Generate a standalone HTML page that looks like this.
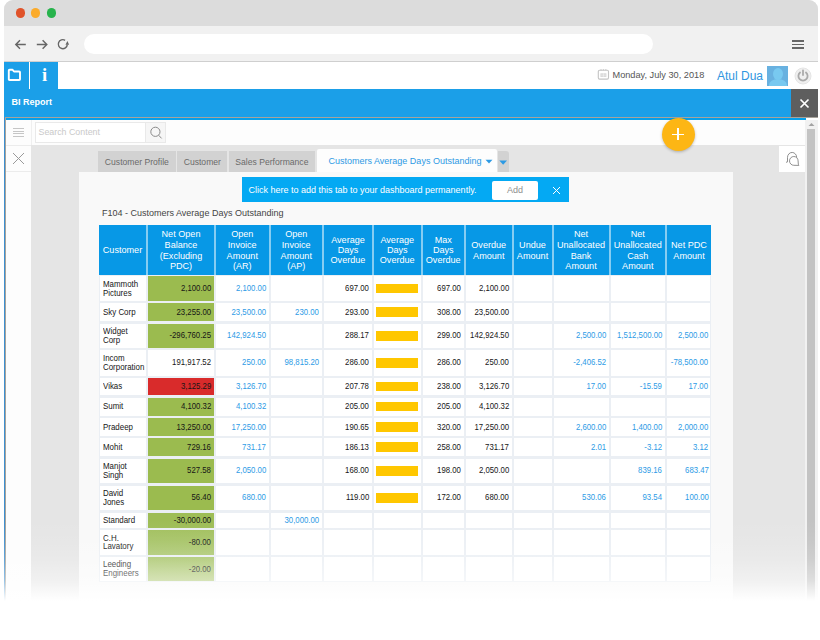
<!DOCTYPE html>
<html><head><meta charset="utf-8">
<style>
*{box-sizing:border-box;margin:0;padding:0}
html,body{width:820px;height:640px;overflow:hidden;background:#fff;font-family:"Liberation Sans", sans-serif}
.a{position:absolute}
#frame{position:absolute;left:4px;top:0;width:814px;height:640px;border-radius:9px 9px 0 0;overflow:hidden;background:#f1f1f1}
#titlebar{position:absolute;left:0;top:0;width:814px;height:26px;background:#dcdcdc}
.dot{position:absolute;width:10px;height:10px;border-radius:50%;top:8px}
#tool{position:absolute;left:0;top:26px;width:814px;height:36px;background:#f1f1f1;border-bottom:1px solid #cfcfcf}
#addr{position:absolute;left:80px;top:8px;width:569px;height:20px;border-radius:10px;background:#fff}
#apphdr{position:absolute;left:0;top:62px;width:814px;height:27px;background:#fff}
#bibar{position:absolute;left:0;top:89px;width:814px;height:28px;background:#1b9fe8}
#leftedge{position:absolute;left:0;top:117px;width:2px;height:523px;background:#3d8fd0}
#panel{position:absolute;left:1px;top:117px;width:813px;height:523px;border-top:1px solid #a8a39b;border-left:1px solid #a8a39b;background:#fff}
#bluestrip{position:absolute;left:0;top:0;width:800px;height:2px;background:#079fe9}
.hc{position:absolute;background:#0798e6;color:#fff;font-size:9.1px;line-height:10.5px;text-align:center;display:flex;align-items:center;justify-content:center}
.hl{position:absolute;color:#fff;font-size:9.1px;line-height:10px;text-align:center;white-space:nowrap}
.hbg{position:absolute;background:#86cdf2}
.tbg{position:absolute;background:#ebeff4}
.c{position:absolute;font-size:8.8px;line-height:8.6px;color:#161616;display:flex;align-items:center;justify-content:flex-end;padding-right:2.7px;white-space:nowrap}
.cust{justify-content:flex-start;padding-left:3px;padding-right:0}
.bl{color:#2d9be6}
.c span{display:inline-block;transform:scaleX(0.885);transform-origin:right center}
.cust span{transform-origin:left center;transform:scaleX(0.9)}
.barc{justify-content:flex-start;padding-left:2px}
.tab{position:absolute;height:21px;background:#d2d2d2;color:#6a6a6a;font-size:8.6px;line-height:22.5px;text-align:center;white-space:nowrap}
.bar{display:block;width:42px;height:9.5px;background:#ffc700}
.barc span{transform:none}
</style></head><body>
<div id="frame">
  <div id="titlebar">
    <div class="dot" style="left:11.5px;width:9.5px;height:9.5px;top:8.3px;background:#e0532a"></div>
    <div class="dot" style="left:26.8px;width:9.5px;height:9.5px;top:8.3px;background:#fbab2b"></div>
    <div class="dot" style="left:42.6px;width:9.5px;height:9.5px;top:8.3px;background:#27b34c"></div>
  </div>
  <div id="tool">
    <svg class="a" style="left:10px;top:12px" width="14" height="13" viewBox="0 0 14 13"><path d="M11.8 6.5 L1.8 6.5 M6 2.3 L1.8 6.5 L6 10.7" fill="none" stroke="#666" stroke-width="1.45"/></svg>
    <svg class="a" style="left:32px;top:12px" width="14" height="13" viewBox="0 0 14 13"><path d="M0.8 6.5 L10.8 6.5 M6.6 2.3 L10.8 6.5 L6.6 10.7" fill="none" stroke="#666" stroke-width="1.45"/></svg>
    <svg class="a" style="left:52px;top:11px" width="16" height="14" viewBox="0 0 16 14"><path d="M11.3 7.6 A4.5 4.5 0 1 1 9.1 3.3" fill="none" stroke="#666" stroke-width="1.4"/><path d="M9.5 7.7 L13.1 7.7 L11.4 3.9 Z" fill="#666"/></svg>
    <div id="addr"></div>
    <div class="a" style="left:788px;top:14px;width:12px;height:1.6px;background:#666"></div>
    <div class="a" style="left:788px;top:17.5px;width:12px;height:1.6px;background:#666"></div>
    <div class="a" style="left:788px;top:21px;width:12px;height:1.6px;background:#666"></div>
  </div>
  <div id="apphdr">
    <div class="a" style="left:0;top:0;width:54px;height:27px;background:#1b9fe8"></div>
    <div class="a" style="left:25px;top:0;width:1px;height:27px;background:#fff"></div>
    <svg class="a" style="left:3px;top:6px" width="15" height="14" viewBox="0 0 15 14"><path d="M1.8 2.6 Q1.8 1.8 2.6 1.8 L5.6 1.8 L7.0 3.5 L12.2 3.5 Q13 3.5 13 4.3 L13 11.2 Q13 12 12.2 12 L2.6 12 Q1.8 12 1.8 11.2 Z" fill="none" stroke="#fff" stroke-width="1.9" stroke-linejoin="round"/></svg>
    <div class="a" style="left:34.5px;top:2.5px;width:12px;text-align:center;font:bold 18.5px 'Liberation Serif',serif;color:#fff;line-height:21px">i</div>
    <svg class="a" style="left:593px;top:6px" width="13" height="13" viewBox="0 0 13 13"><rect x="1.3" y="2.2" width="10.2" height="8.9" rx="1.3" fill="none" stroke="#c4c4c4" stroke-width="1.1"/><path d="M4 1 L4 2.6 M6.4 1 L6.4 2.6 M8.8 1 L8.8 2.6" stroke="#c4c4c4" stroke-width="0.8"/><rect x="3.4" y="5.3" width="6" height="3.6" fill="#d6d6d6"/><path d="M6.4 5.3 L6.4 8.9 M3.4 7.1 L9.4 7.1" stroke="#f4f4f4" stroke-width="0.6"/></svg>
    <div class="a" style="left:608.5px;top:7.5px;font-size:9.2px;line-height:11px;color:#555">Monday, July 30, 2018</div>
    <div class="a" style="left:713px;top:5.5px;font-size:12px;line-height:16px;color:#2e96e0">Atul Dua</div>
    <div class="a" style="left:763px;top:3.5px;width:21px;height:20.5px;background:#68b1e0;overflow:hidden">
      <div class="a" style="left:5.5px;top:2.5px;width:10px;height:12px;border-radius:50%;background:#78c9f0"></div>
      <div class="a" style="left:1.5px;top:13.5px;width:18px;height:12px;border-radius:50% 50% 0 0;background:#78c9f0"></div>
    </div>
    <svg class="a" style="left:790px;top:4.5px" width="18" height="18" viewBox="0 0 18 18"><circle cx="9" cy="9" r="8" fill="#efefef" stroke="#e4e4e4" stroke-width="1"/><path d="M6.04 5.48 A4.6 4.6 0 1 0 11.96 5.48" fill="none" stroke="#aaa" stroke-width="1.8" stroke-linecap="round"/><path d="M9 3.4 L9 8" stroke="#aaa" stroke-width="1.8" stroke-linecap="round"/></svg>
  </div>
  <div id="bibar">
    <div class="a" style="left:7.5px;top:8px;font-weight:bold;font-size:9px;line-height:11px;color:#fff">BI Report</div>
    <div class="a" style="left:787px;top:0;width:27px;height:28px;background:#5e5e5e"></div>
    <svg class="a" style="left:795px;top:9px" width="11" height="11" viewBox="0 0 11 11"><path d="M1.5 1.5 L9.5 9.5 M9.5 1.5 L1.5 9.5" stroke="#fff" stroke-width="1.7"/></svg>
  </div>
  <div id="leftedge"></div>
  <div id="panel">
    <div id="bluestrip"></div>
    <!-- toolbar row -->
    <div class="a" style="left:0;top:2px;width:799px;height:25px;background:#fdfdfd"></div>
    <!-- gray area -->
    <div class="a" style="left:25.3px;top:26.6px;width:774px;height:500px;background:#e5e5e5"></div>
    <div class="a" style="left:25px;top:2px;width:1px;height:25px;background:#efefef"></div>
    <!-- sidebar -->
    <div class="a" style="left:0;top:2px;width:25.4px;height:520px;background:#fdfdfd"></div>
    <div class="a" style="left:0;top:27px;width:25.4px;height:1px;background:#ececec"></div>
    <div class="a" style="left:0;top:53.3px;width:25.4px;height:1px;background:#ececec"></div>
    <div class="a" style="left:7px;top:9.8px;width:10.5px;height:0.8px;background:#c6c6c6"></div>
    <div class="a" style="left:7px;top:12.7px;width:10.5px;height:0.8px;background:#c6c6c6"></div>
    <div class="a" style="left:7px;top:15.2px;width:10.5px;height:0.8px;background:#c6c6c6"></div>
    <div class="a" style="left:7px;top:17.8px;width:10.5px;height:0.8px;background:#c6c6c6"></div>
    <svg class="a" style="left:6px;top:34px" width="13" height="13" viewBox="0 0 13 13"><path d="M1 1 L12 12 M12 1 L1 12" stroke="#9a9a9a" stroke-width="1"/></svg>
    <!-- search -->
    <div class="a" style="left:29px;top:4px;width:111px;height:20.5px;background:#fff;border:1px solid #e9e9e9"></div>
    <div class="a" style="left:139px;top:4px;width:21px;height:20.5px;background:#f6f6f6;border:1px solid #e9e9e9"></div>
    <div class="a" style="left:32.5px;top:9px;font-size:8.85px;line-height:11px;color:#c9c9c9">Search Content</div>
    <svg class="a" style="left:143px;top:7px" width="14" height="15" viewBox="0 0 14 15"><circle cx="6.4" cy="6.8" r="4.6" fill="none" stroke="#8a8a8a" stroke-width="1"/><path d="M9.6 10.2 L12.6 13.4" stroke="#8a8a8a" stroke-width="1"/></svg>
    <!-- right chat box -->
    <div class="a" style="left:773px;top:27.5px;width:26px;height:26px;background:#fff"></div>
    <svg class="a" style="left:776px;top:30px" width="22" height="22" viewBox="0 0 22 22"><path d="M4.0 14.3 L5.5 13.9 L5.5 9.3 A4.6 5.0 0 0 1 14.7 9.6" fill="none" stroke="#8a8a8a" stroke-width="0.95"/><path d="M11.8 17.3 A4.3 4.4 0 1 1 16.1 12.9 L16.3 16.2 L16.9 17.4 Z" fill="#fff" stroke="#8a8a8a" stroke-width="0.95" stroke-linejoin="round"/></svg>
    <!-- scrollbar -->
    <div class="a" style="left:799px;top:2px;width:13px;height:521px;background:#f1f1f1"></div>
    <svg class="a" style="left:802px;top:4px" width="7" height="5" viewBox="0 0 7 5"><path d="M0.5 4 L3.5 1 L6.5 4 Z" fill="#a3a3a3"/></svg>
    <div class="a" style="left:801px;top:11px;width:8px;height:511px;background:#c3c3c3"></div>
    <!-- tabs -->
    <div class="tab" style="left:92px;top:33px;width:77.7px">Customer Profile</div>
    <div class="tab" style="left:171.2px;top:33px;width:50.3px">Customer</div>
    <div class="tab" style="left:223px;top:33px;width:85.8px">Sales Performance</div>
    <div class="a" style="left:310.7px;top:31px;width:180.6px;height:23px;background:#fdfdfd;border-radius:2px 2px 0 0"></div>
    <div class="a" style="left:322.5px;top:37.5px;font-size:9px;line-height:11px;color:#2d9ae4">Customers Average Days Outstanding</div>
    <svg class="a" style="left:479px;top:41px" width="8" height="5" viewBox="0 0 8 5"><path d="M0.5 0.8 L7.5 0.8 L4 4.4 Z" fill="#2d9ae4"/></svg>
    <div class="a" style="left:491.8px;top:33.3px;width:11px;height:20.7px;background:#d2d2d2;border-radius:0 3px 0 0"></div>
    <svg class="a" style="left:493.3px;top:41.8px" width="9" height="6" viewBox="0 0 9 6"><path d="M0.3 0.5 L8 0.5 L4.15 4.8 Z" fill="#2d9ae4"/></svg>
    <!-- content panel -->
    <div class="a" style="left:72.5px;top:54px;width:654.5px;height:470px;background:#f9f9f9"></div>
    <div class="a" style="left:236px;top:59.3px;width:327.3px;height:25px;background:#04a9f3"></div>
    <div class="a" style="left:242.5px;top:66.5px;font-size:9px;line-height:11px;color:#fff">Click here to add this tab to your dashboard permanently.</div>
    <div class="a" style="left:485.6px;top:63px;width:46.7px;height:18.5px;background:#fff;border-radius:2px"></div>
    <div class="a" style="left:485.5px;top:66.8px;width:47px;text-align:center;font-size:9px;line-height:11px;color:#8f8f8f">Add</div>
    <svg class="a" style="left:546px;top:68px" width="9" height="9" viewBox="0 0 9 9"><path d="M1 1 L8 8 M8 1 L1 8" stroke="#fff" stroke-width="1"/></svg>
    <div class="a" style="left:96px;top:90px;font-size:9px;line-height:11px;color:#444">F104 - Customers Average Days Outstanding</div>
  </div>
  <!-- FAB -->
  <div class="a" style="left:658px;top:118px;width:33px;height:33px;border-radius:50%;background:#fdb614;box-shadow:0 1px 3px rgba(0,0,0,0.25)"></div>
  <div class="a" style="left:668px;top:133.5px;width:12px;height:1.5px;background:#fff"></div>
  <div class="a" style="left:673.3px;top:128.3px;width:1.5px;height:12px;background:#fff"></div>
</div>
<div class="tbg" style="left:99px;top:275px;width:612px;height:306.5px"></div>
<div class="hbg" style="left:99px;top:225px;width:612px;height:50px"></div>
<div class="hc" style="left:99px;top:225px;width:47px;height:50px"></div>
<div class="hl" style="left:99px;top:245px;width:47px">Customer</div>
<div class="hc" style="left:148px;top:225px;width:66px;height:50px"></div>
<div class="hl" style="left:148px;top:229px;width:66px">Net Open</div>
<div class="hl" style="left:148px;top:240px;width:66px">Balance</div>
<div class="hl" style="left:148px;top:251px;width:66px">(Excluding</div>
<div class="hl" style="left:148px;top:261px;width:66px">PDC)</div>
<div class="hc" style="left:216px;top:225px;width:52.5px;height:50px"></div>
<div class="hl" style="left:216px;top:229px;width:52.5px">Open</div>
<div class="hl" style="left:216px;top:240px;width:52.5px">Invoice</div>
<div class="hl" style="left:216px;top:251px;width:52.5px">Amount</div>
<div class="hl" style="left:216px;top:261px;width:52.5px">(AR)</div>
<div class="hc" style="left:270.5px;top:225px;width:51.5px;height:50px"></div>
<div class="hl" style="left:270.5px;top:229px;width:51.5px">Open</div>
<div class="hl" style="left:270.5px;top:240px;width:51.5px">Invoice</div>
<div class="hl" style="left:270.5px;top:251px;width:51.5px">Amount</div>
<div class="hl" style="left:270.5px;top:261px;width:51.5px">(AP)</div>
<div class="hc" style="left:324px;top:225px;width:48px;height:50px"></div>
<div class="hl" style="left:324px;top:235px;width:48px">Average</div>
<div class="hl" style="left:324px;top:245px;width:48px">Days</div>
<div class="hl" style="left:324px;top:255px;width:48px">Overdue</div>
<div class="hc" style="left:374px;top:225px;width:46.5px;height:50px"></div>
<div class="hl" style="left:374px;top:235px;width:46.5px">Average</div>
<div class="hl" style="left:374px;top:245px;width:46.5px">Days</div>
<div class="hl" style="left:374px;top:255px;width:46.5px">Overdue</div>
<div class="hc" style="left:422.5px;top:225px;width:41.5px;height:50px"></div>
<div class="hl" style="left:422.5px;top:235px;width:41.5px">Max</div>
<div class="hl" style="left:422.5px;top:245px;width:41.5px">Days</div>
<div class="hl" style="left:422.5px;top:255px;width:41.5px">Overdue</div>
<div class="hc" style="left:466px;top:225px;width:45.5px;height:50px"></div>
<div class="hl" style="left:466px;top:240px;width:45.5px">Overdue</div>
<div class="hl" style="left:466px;top:251px;width:45.5px">Amount</div>
<div class="hc" style="left:513.5px;top:225px;width:38px;height:50px"></div>
<div class="hl" style="left:513.5px;top:240px;width:38px">Undue</div>
<div class="hl" style="left:513.5px;top:251px;width:38px">Amount</div>
<div class="hc" style="left:553.5px;top:225px;width:55px;height:50px"></div>
<div class="hl" style="left:553.5px;top:229px;width:55px">Net</div>
<div class="hl" style="left:553.5px;top:240px;width:55px">Unallocated</div>
<div class="hl" style="left:553.5px;top:251px;width:55px">Bank</div>
<div class="hl" style="left:553.5px;top:261px;width:55px">Amount</div>
<div class="hc" style="left:610.5px;top:225px;width:54.5px;height:50px"></div>
<div class="hl" style="left:610.5px;top:229px;width:54.5px">Net</div>
<div class="hl" style="left:610.5px;top:240px;width:54.5px">Unallocated</div>
<div class="hl" style="left:610.5px;top:251px;width:54.5px">Cash</div>
<div class="hl" style="left:610.5px;top:261px;width:54.5px">Amount</div>
<div class="hc" style="left:667px;top:225px;width:44px;height:50px"></div>
<div class="hl" style="left:667px;top:240px;width:44px">Net PDC</div>
<div class="hl" style="left:667px;top:251px;width:44px">Amount</div>
<div class="c cust" style="left:100px;top:276px;width:46px;height:25px;background:#fff;"><span>Mammoth<br>Pictures</span></div>
<div class="c" style="left:148px;top:276px;width:66px;height:25px;background:#9bbb4f;"><span>2,100.00</span></div>
<div class="c bl" style="left:216px;top:276px;width:52.5px;height:25px;background:#fff;"><span>2,100.00</span></div>
<div class="c bl" style="left:270.5px;top:276px;width:51.5px;height:25px;background:#fff;"><span></span></div>
<div class="c" style="left:324px;top:276px;width:48px;height:25px;background:#fff;"><span>697.00</span></div>
<div class="c barc" style="left:374px;top:276px;width:46.5px;height:25px;background:#fff;"><span><i class="bar"></i></span></div>
<div class="c" style="left:422.5px;top:276px;width:41.5px;height:25px;background:#fff;"><span>697.00</span></div>
<div class="c" style="left:466px;top:276px;width:45.5px;height:25px;background:#fff;"><span>2,100.00</span></div>
<div class="c" style="left:513.5px;top:276px;width:38px;height:25px;background:#fff;"><span></span></div>
<div class="c bl" style="left:553.5px;top:276px;width:55px;height:25px;background:#fff;"><span></span></div>
<div class="c bl" style="left:610.5px;top:276px;width:54.5px;height:25px;background:#fff;"><span></span></div>
<div class="c bl" style="left:667px;top:276px;width:43px;height:25px;background:#fff;padding-right:1.6px;"><span></span></div>
<div class="c cust" style="left:100px;top:303px;width:46px;height:18px;background:#fff;"><span>Sky Corp</span></div>
<div class="c" style="left:148px;top:303px;width:66px;height:18px;background:#9bbb4f;"><span>23,255.00</span></div>
<div class="c bl" style="left:216px;top:303px;width:52.5px;height:18px;background:#fff;"><span>23,500.00</span></div>
<div class="c bl" style="left:270.5px;top:303px;width:51.5px;height:18px;background:#fff;"><span>230.00</span></div>
<div class="c" style="left:324px;top:303px;width:48px;height:18px;background:#fff;"><span>293.00</span></div>
<div class="c barc" style="left:374px;top:303px;width:46.5px;height:18px;background:#fff;"><span><i class="bar"></i></span></div>
<div class="c" style="left:422.5px;top:303px;width:41.5px;height:18px;background:#fff;"><span>308.00</span></div>
<div class="c" style="left:466px;top:303px;width:45.5px;height:18px;background:#fff;"><span>23,500.00</span></div>
<div class="c" style="left:513.5px;top:303px;width:38px;height:18px;background:#fff;"><span></span></div>
<div class="c bl" style="left:553.5px;top:303px;width:55px;height:18px;background:#fff;"><span></span></div>
<div class="c bl" style="left:610.5px;top:303px;width:54.5px;height:18px;background:#fff;"><span></span></div>
<div class="c bl" style="left:667px;top:303px;width:43px;height:18px;background:#fff;padding-right:1.6px;"><span></span></div>
<div class="c cust" style="left:100px;top:323.5px;width:46px;height:24.5px;background:#fff;"><span>Widget<br>Corp</span></div>
<div class="c" style="left:148px;top:323.5px;width:66px;height:24.5px;background:#9bbb4f;"><span>-296,760.25</span></div>
<div class="c bl" style="left:216px;top:323.5px;width:52.5px;height:24.5px;background:#fff;"><span>142,924.50</span></div>
<div class="c bl" style="left:270.5px;top:323.5px;width:51.5px;height:24.5px;background:#fff;"><span></span></div>
<div class="c" style="left:324px;top:323.5px;width:48px;height:24.5px;background:#fff;"><span>288.17</span></div>
<div class="c barc" style="left:374px;top:323.5px;width:46.5px;height:24.5px;background:#fff;"><span><i class="bar"></i></span></div>
<div class="c" style="left:422.5px;top:323.5px;width:41.5px;height:24.5px;background:#fff;"><span>299.00</span></div>
<div class="c" style="left:466px;top:323.5px;width:45.5px;height:24.5px;background:#fff;"><span>142,924.50</span></div>
<div class="c" style="left:513.5px;top:323.5px;width:38px;height:24.5px;background:#fff;"><span></span></div>
<div class="c bl" style="left:553.5px;top:323.5px;width:55px;height:24.5px;background:#fff;"><span>2,500.00</span></div>
<div class="c bl" style="left:610.5px;top:323.5px;width:54.5px;height:24.5px;background:#fff;"><span>1,512,500.00</span></div>
<div class="c bl" style="left:667px;top:323.5px;width:43px;height:24.5px;background:#fff;padding-right:1.6px;"><span>2,500.00</span></div>
<div class="c cust" style="left:100px;top:350px;width:46px;height:25.5px;background:#fff;"><span>Incom<br>Corporation</span></div>
<div class="c" style="left:148px;top:350px;width:66px;height:25.5px;background:#fff;"><span>191,917.52</span></div>
<div class="c bl" style="left:216px;top:350px;width:52.5px;height:25.5px;background:#fff;"><span>250.00</span></div>
<div class="c bl" style="left:270.5px;top:350px;width:51.5px;height:25.5px;background:#fff;"><span>98,815.20</span></div>
<div class="c" style="left:324px;top:350px;width:48px;height:25.5px;background:#fff;"><span>286.00</span></div>
<div class="c barc" style="left:374px;top:350px;width:46.5px;height:25.5px;background:#fff;"><span><i class="bar"></i></span></div>
<div class="c" style="left:422.5px;top:350px;width:41.5px;height:25.5px;background:#fff;"><span>286.00</span></div>
<div class="c" style="left:466px;top:350px;width:45.5px;height:25.5px;background:#fff;"><span>250.00</span></div>
<div class="c" style="left:513.5px;top:350px;width:38px;height:25.5px;background:#fff;"><span></span></div>
<div class="c bl" style="left:553.5px;top:350px;width:55px;height:25.5px;background:#fff;"><span>-2,406.52</span></div>
<div class="c bl" style="left:610.5px;top:350px;width:54.5px;height:25.5px;background:#fff;"><span></span></div>
<div class="c bl" style="left:667px;top:350px;width:43px;height:25.5px;background:#fff;padding-right:1.6px;"><span>-78,500.00</span></div>
<div class="c cust" style="left:100px;top:377.5px;width:46px;height:17.5px;background:#fff;"><span>Vikas</span></div>
<div class="c" style="left:148px;top:377.5px;width:66px;height:17.5px;background:#d92b2b;"><span>3,125.29</span></div>
<div class="c bl" style="left:216px;top:377.5px;width:52.5px;height:17.5px;background:#fff;"><span>3,126.70</span></div>
<div class="c bl" style="left:270.5px;top:377.5px;width:51.5px;height:17.5px;background:#fff;"><span></span></div>
<div class="c" style="left:324px;top:377.5px;width:48px;height:17.5px;background:#fff;"><span>207.78</span></div>
<div class="c barc" style="left:374px;top:377.5px;width:46.5px;height:17.5px;background:#fff;"><span><i class="bar"></i></span></div>
<div class="c" style="left:422.5px;top:377.5px;width:41.5px;height:17.5px;background:#fff;"><span>238.00</span></div>
<div class="c" style="left:466px;top:377.5px;width:45.5px;height:17.5px;background:#fff;"><span>3,126.70</span></div>
<div class="c" style="left:513.5px;top:377.5px;width:38px;height:17.5px;background:#fff;"><span></span></div>
<div class="c bl" style="left:553.5px;top:377.5px;width:55px;height:17.5px;background:#fff;"><span>17.00</span></div>
<div class="c bl" style="left:610.5px;top:377.5px;width:54.5px;height:17.5px;background:#fff;"><span>-15.59</span></div>
<div class="c bl" style="left:667px;top:377.5px;width:43px;height:17.5px;background:#fff;padding-right:1.6px;"><span>17.00</span></div>
<div class="c cust" style="left:100px;top:397.5px;width:46px;height:18px;background:#fff;"><span>Sumit</span></div>
<div class="c" style="left:148px;top:397.5px;width:66px;height:18px;background:#9bbb4f;"><span>4,100.32</span></div>
<div class="c bl" style="left:216px;top:397.5px;width:52.5px;height:18px;background:#fff;"><span>4,100.32</span></div>
<div class="c bl" style="left:270.5px;top:397.5px;width:51.5px;height:18px;background:#fff;"><span></span></div>
<div class="c" style="left:324px;top:397.5px;width:48px;height:18px;background:#fff;"><span>205.00</span></div>
<div class="c barc" style="left:374px;top:397.5px;width:46.5px;height:18px;background:#fff;"><span><i class="bar"></i></span></div>
<div class="c" style="left:422.5px;top:397.5px;width:41.5px;height:18px;background:#fff;"><span>205.00</span></div>
<div class="c" style="left:466px;top:397.5px;width:45.5px;height:18px;background:#fff;"><span>4,100.32</span></div>
<div class="c" style="left:513.5px;top:397.5px;width:38px;height:18px;background:#fff;"><span></span></div>
<div class="c bl" style="left:553.5px;top:397.5px;width:55px;height:18px;background:#fff;"><span></span></div>
<div class="c bl" style="left:610.5px;top:397.5px;width:54.5px;height:18px;background:#fff;"><span></span></div>
<div class="c bl" style="left:667px;top:397.5px;width:43px;height:18px;background:#fff;padding-right:1.6px;"><span></span></div>
<div class="c cust" style="left:100px;top:418px;width:46px;height:18px;background:#fff;"><span>Pradeep</span></div>
<div class="c" style="left:148px;top:418px;width:66px;height:18px;background:#9bbb4f;"><span>13,250.00</span></div>
<div class="c bl" style="left:216px;top:418px;width:52.5px;height:18px;background:#fff;"><span>17,250.00</span></div>
<div class="c bl" style="left:270.5px;top:418px;width:51.5px;height:18px;background:#fff;"><span></span></div>
<div class="c" style="left:324px;top:418px;width:48px;height:18px;background:#fff;"><span>190.65</span></div>
<div class="c barc" style="left:374px;top:418px;width:46.5px;height:18px;background:#fff;"><span><i class="bar"></i></span></div>
<div class="c" style="left:422.5px;top:418px;width:41.5px;height:18px;background:#fff;"><span>320.00</span></div>
<div class="c" style="left:466px;top:418px;width:45.5px;height:18px;background:#fff;"><span>17,250.00</span></div>
<div class="c" style="left:513.5px;top:418px;width:38px;height:18px;background:#fff;"><span></span></div>
<div class="c bl" style="left:553.5px;top:418px;width:55px;height:18px;background:#fff;"><span>2,600.00</span></div>
<div class="c bl" style="left:610.5px;top:418px;width:54.5px;height:18px;background:#fff;"><span>1,400.00</span></div>
<div class="c bl" style="left:667px;top:418px;width:43px;height:18px;background:#fff;padding-right:1.6px;"><span>2,000.00</span></div>
<div class="c cust" style="left:100px;top:438px;width:46px;height:18px;background:#fff;"><span>Mohit</span></div>
<div class="c" style="left:148px;top:438px;width:66px;height:18px;background:#9bbb4f;"><span>729.16</span></div>
<div class="c bl" style="left:216px;top:438px;width:52.5px;height:18px;background:#fff;"><span>731.17</span></div>
<div class="c bl" style="left:270.5px;top:438px;width:51.5px;height:18px;background:#fff;"><span></span></div>
<div class="c" style="left:324px;top:438px;width:48px;height:18px;background:#fff;"><span>186.13</span></div>
<div class="c barc" style="left:374px;top:438px;width:46.5px;height:18px;background:#fff;"><span><i class="bar"></i></span></div>
<div class="c" style="left:422.5px;top:438px;width:41.5px;height:18px;background:#fff;"><span>258.00</span></div>
<div class="c" style="left:466px;top:438px;width:45.5px;height:18px;background:#fff;"><span>731.17</span></div>
<div class="c" style="left:513.5px;top:438px;width:38px;height:18px;background:#fff;"><span></span></div>
<div class="c bl" style="left:553.5px;top:438px;width:55px;height:18px;background:#fff;"><span>2.01</span></div>
<div class="c bl" style="left:610.5px;top:438px;width:54.5px;height:18px;background:#fff;"><span>-3.12</span></div>
<div class="c bl" style="left:667px;top:438px;width:43px;height:18px;background:#fff;padding-right:1.6px;"><span>3.12</span></div>
<div class="c cust" style="left:100px;top:458.5px;width:46px;height:24.5px;background:#fff;"><span>Manjot<br>Singh</span></div>
<div class="c" style="left:148px;top:458.5px;width:66px;height:24.5px;background:#9bbb4f;"><span>527.58</span></div>
<div class="c bl" style="left:216px;top:458.5px;width:52.5px;height:24.5px;background:#fff;"><span>2,050.00</span></div>
<div class="c bl" style="left:270.5px;top:458.5px;width:51.5px;height:24.5px;background:#fff;"><span></span></div>
<div class="c" style="left:324px;top:458.5px;width:48px;height:24.5px;background:#fff;"><span>168.00</span></div>
<div class="c barc" style="left:374px;top:458.5px;width:46.5px;height:24.5px;background:#fff;"><span><i class="bar"></i></span></div>
<div class="c" style="left:422.5px;top:458.5px;width:41.5px;height:24.5px;background:#fff;"><span>198.00</span></div>
<div class="c" style="left:466px;top:458.5px;width:45.5px;height:24.5px;background:#fff;"><span>2,050.00</span></div>
<div class="c" style="left:513.5px;top:458.5px;width:38px;height:24.5px;background:#fff;"><span></span></div>
<div class="c bl" style="left:553.5px;top:458.5px;width:55px;height:24.5px;background:#fff;"><span></span></div>
<div class="c bl" style="left:610.5px;top:458.5px;width:54.5px;height:24.5px;background:#fff;"><span>839.16</span></div>
<div class="c bl" style="left:667px;top:458.5px;width:43px;height:24.5px;background:#fff;padding-right:1.6px;"><span>683.47</span></div>
<div class="c cust" style="left:100px;top:485.5px;width:46px;height:24.5px;background:#fff;"><span>David<br>Jones</span></div>
<div class="c" style="left:148px;top:485.5px;width:66px;height:24.5px;background:#9bbb4f;"><span>56.40</span></div>
<div class="c bl" style="left:216px;top:485.5px;width:52.5px;height:24.5px;background:#fff;"><span>680.00</span></div>
<div class="c bl" style="left:270.5px;top:485.5px;width:51.5px;height:24.5px;background:#fff;"><span></span></div>
<div class="c" style="left:324px;top:485.5px;width:48px;height:24.5px;background:#fff;"><span>119.00</span></div>
<div class="c barc" style="left:374px;top:485.5px;width:46.5px;height:24.5px;background:#fff;"><span><i class="bar"></i></span></div>
<div class="c" style="left:422.5px;top:485.5px;width:41.5px;height:24.5px;background:#fff;"><span>172.00</span></div>
<div class="c" style="left:466px;top:485.5px;width:45.5px;height:24.5px;background:#fff;"><span>680.00</span></div>
<div class="c" style="left:513.5px;top:485.5px;width:38px;height:24.5px;background:#fff;"><span></span></div>
<div class="c bl" style="left:553.5px;top:485.5px;width:55px;height:24.5px;background:#fff;"><span>530.06</span></div>
<div class="c bl" style="left:610.5px;top:485.5px;width:54.5px;height:24.5px;background:#fff;"><span>93.54</span></div>
<div class="c bl" style="left:667px;top:485.5px;width:43px;height:24.5px;background:#fff;padding-right:1.6px;"><span>100.00</span></div>
<div class="c cust" style="left:100px;top:512.5px;width:46px;height:15px;background:#fff;"><span>Standard</span></div>
<div class="c" style="left:148px;top:512.5px;width:66px;height:15px;background:#9ebd56;"><span>-30,000.00</span></div>
<div class="c bl" style="left:216px;top:512.5px;width:52.5px;height:15px;background:#fff;"><span></span></div>
<div class="c bl" style="left:270.5px;top:512.5px;width:51.5px;height:15px;background:#fff;"><span>30,000.00</span></div>
<div class="c" style="left:324px;top:512.5px;width:48px;height:15px;background:#fff;"><span></span></div>
<div class="c" style="left:374px;top:512.5px;width:46.5px;height:15px;background:#fff;"><span></span></div>
<div class="c" style="left:422.5px;top:512.5px;width:41.5px;height:15px;background:#fff;"><span></span></div>
<div class="c" style="left:466px;top:512.5px;width:45.5px;height:15px;background:#fff;"><span></span></div>
<div class="c" style="left:513.5px;top:512.5px;width:38px;height:15px;background:#fff;"><span></span></div>
<div class="c bl" style="left:553.5px;top:512.5px;width:55px;height:15px;background:#fff;"><span></span></div>
<div class="c bl" style="left:610.5px;top:512.5px;width:54.5px;height:15px;background:#fff;"><span></span></div>
<div class="c bl" style="left:667px;top:512.5px;width:43px;height:15px;background:#fff;padding-right:1.6px;"><span></span></div>
<div class="c cust" style="left:100px;top:530px;width:46px;height:24.5px;background:#fff;"><span>C.H.<br>Lavatory</span></div>
<div class="c" style="left:148px;top:530px;width:66px;height:24.5px;background:linear-gradient(#a2c05e,#a9c66c);"><span>-80.00</span></div>
<div class="c bl" style="left:216px;top:530px;width:52.5px;height:24.5px;background:#fff;"><span></span></div>
<div class="c bl" style="left:270.5px;top:530px;width:51.5px;height:24.5px;background:#fff;"><span></span></div>
<div class="c" style="left:324px;top:530px;width:48px;height:24.5px;background:#fff;"><span></span></div>
<div class="c" style="left:374px;top:530px;width:46.5px;height:24.5px;background:#fff;"><span></span></div>
<div class="c" style="left:422.5px;top:530px;width:41.5px;height:24.5px;background:#fff;"><span></span></div>
<div class="c" style="left:466px;top:530px;width:45.5px;height:24.5px;background:#fff;"><span></span></div>
<div class="c" style="left:513.5px;top:530px;width:38px;height:24.5px;background:#fff;"><span></span></div>
<div class="c bl" style="left:553.5px;top:530px;width:55px;height:24.5px;background:#fff;"><span></span></div>
<div class="c bl" style="left:610.5px;top:530px;width:54.5px;height:24.5px;background:#fff;"><span></span></div>
<div class="c bl" style="left:667px;top:530px;width:43px;height:24.5px;background:#fff;padding-right:1.6px;"><span></span></div>
<div class="c cust" style="left:100px;top:557px;width:46px;height:24px;background:#fff;"><span>Leeding<br>Engineers</span></div>
<div class="c" style="left:148px;top:557px;width:66px;height:24px;background:linear-gradient(#a8c56a,#b2cb78);"><span>-20.00</span></div>
<div class="c bl" style="left:216px;top:557px;width:52.5px;height:24px;background:#fff;"><span></span></div>
<div class="c bl" style="left:270.5px;top:557px;width:51.5px;height:24px;background:#fff;"><span></span></div>
<div class="c" style="left:324px;top:557px;width:48px;height:24px;background:#fff;"><span></span></div>
<div class="c" style="left:374px;top:557px;width:46.5px;height:24px;background:#fff;"><span></span></div>
<div class="c" style="left:422.5px;top:557px;width:41.5px;height:24px;background:#fff;"><span></span></div>
<div class="c" style="left:466px;top:557px;width:45.5px;height:24px;background:#fff;"><span></span></div>
<div class="c" style="left:513.5px;top:557px;width:38px;height:24px;background:#fff;"><span></span></div>
<div class="c bl" style="left:553.5px;top:557px;width:55px;height:24px;background:#fff;"><span></span></div>
<div class="c bl" style="left:610.5px;top:557px;width:54.5px;height:24px;background:#fff;"><span></span></div>
<div class="c bl" style="left:667px;top:557px;width:43px;height:24px;background:#fff;padding-right:1.6px;"><span></span></div>
<div class="a" style="left:0;top:520px;width:820px;height:120px;background:linear-gradient(to bottom,rgba(255,255,255,0) 0px,rgba(255,255,255,0.08) 22px,rgba(255,255,255,0.2) 40px,rgba(255,255,255,0.45) 60px,rgba(255,255,255,1) 81px,#fff 120px)"></div>
</body></html>
